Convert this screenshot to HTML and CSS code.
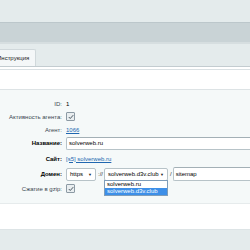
FILE: index.html
```html
<!DOCTYPE html>
<html lang="ru">
<head>
<meta charset="utf-8">
<link rel="stylesheet" href="styles.css">
</head>
<body>
<div class="top"></div>
<div class="band"></div>
<div class="tabs">
  <div class="tab">Инструкция</div>
</div>
<div class="sep"></div>
<div class="content">
  <div class="panel">
    <div class="lbl">ID:</div><div class="val">1</div>
    <div class="lbl">Активность агента:</div><div class="val"><span class="cb"><svg viewBox="0 0 8 8" width="6" height="6"><path d="M1 4 L3 6 L7 1.5" fill="none" stroke="#3c4a55" stroke-width="1.2"/></svg></span></div>
    <div class="lbl">Агент:</div><div class="val"><a class="link">1066</a></div>
    <div class="lbl b">Название:</div><div class="val"><div class="inp wide">solverweb.ru</div></div>
    <div class="lbl b">Сайт:</div><div class="val"><a class="link">[s5] solverweb.ru</a></div>
    <div class="lbl b">Домен:</div>
    <div class="val dom">
      <div class="sel s1">https<span class="arr">▼</span></div>
      <span class="sym">://</span>
      <div class="selwrap">
        <div class="sel s2">solverweb.d3v.club<span class="arr">▼</span></div>
        <div class="drop">
          <div class="opt">solverweb.ru</div>
          <div class="opt on">solverweb.d3v.club</div>
        </div>
      </div>
      <span class="sym">/</span>
      <div class="inp path">sitemap</div>
    </div>
    <div class="lbl">Сжатие в gzip:</div><div class="val"><span class="cb"><svg viewBox="0 0 8 8" width="6" height="6"><path d="M1 4 L3 6 L7 1.5" fill="none" stroke="#3c4a55" stroke-width="1.2"/></svg></span></div>
  </div>
</div>
<div class="gap"></div>
<div class="footer"></div>
</body>
</html>
```
FILE: styles.css
```css
html, body {
  margin: 0;
  padding: 0;
  width: 250px;
  height: 250px;
  overflow: hidden;
  background: #fff;
  font-family: "Liberation Sans", Arial, sans-serif;
  font-size: 6px;
  color: #2d3a43;
}
.top {
  height: 22px;
  background: #e4ebec;
}
.band {
  height: 19px;
  background: #c9d3d6;
  border-top: 1px solid #bcc7cb;
  border-bottom: 2px solid #d6dee0;
}
.tabs {
  height: 22px;
  background: #e4ebec;
  display: flex;
  align-items: flex-end;
  overflow: hidden;
}
.tab {
  margin-left: -8px;
  height: 16px;
  padding: 0 6px 0 4px;
  background: #f4f7f8;
  border: 1px solid #d0d8db;
  border-bottom: none;
  border-radius: 2px 2px 0 0;
  display: flex;
  align-items: center;
  font-size: 6px;
  color: #222;
}
.sep {
  height: 2px;
  border-top: 1px solid #c3ccd0;
  border-bottom: 1px solid #d9e0e3;
}
.content {
  padding-top: 19px;
}
.panel {
  background: #f5f9f9;
  border-top: 1px solid #dde3e5;
  border-bottom: 1px solid #e6ebec;
  padding: 7px 0 7px 0;
  display: grid;
  grid-template-columns: 62px 1fr;
  grid-template-rows: 13px 13px 13px 14px 17px 14px 15px;
  column-gap: 4px;
  align-items: center;
}
.lbl {
  text-align: right;
  color: #3a4750;
  white-space: nowrap;
}
.lbl.b {
  font-weight: bold;
  color: #000;
}
.val {
  display: flex;
  align-items: center;
  color: #000;
  min-width: 0;
}
.cb {
  width: 7px;
  height: 7px;
  border: 1px solid #8c9aa4;
  border-radius: 1px;
  background: #e9eef0;
  display: flex;
  align-items: center;
  justify-content: center;
}
.link {
  color: #2067b0;
  text-decoration: underline;
}
.inp {
  background: #fff;
  border: 1px solid #b7c3c8;
  border-top-color: #a3b0b6;
  border-right: none;
  border-radius: 2px 0 0 2px;
  height: 11px;
  display: flex;
  align-items: center;
  padding-left: 2px;
  color: #000;
}
.inp.wide {
  flex: 1;
}
.sel {
  position: relative;
  background: #fff;
  border: 1px solid #b7c3c8;
  border-radius: 2px;
  height: 11px;
  display: flex;
  align-items: center;
  padding-left: 3px;
  color: #000;
}
.s1 {
  width: 25px;
}
.s2 {
  width: 59px;
}
.arr {
  position: absolute;
  right: 3px;
  top: 4px;
  font-size: 4px;
  line-height: 4px;
  color: #222;
}
.sym {
  padding: 0 1px 0 2px;
  color: #333;
}
.selwrap {
  position: relative;
}
.drop {
  position: absolute;
  left: 0;
  top: 12px;
  width: 62px;
  background: #fff;
  border: 1px solid #7f9db9;
  z-index: 2;
}
.opt {
  height: 7px;
  line-height: 7px;
  padding-left: 2px;
  color: #000;
  white-space: nowrap;
}
.opt.on {
  background: #3d8fe8;
  color: #fff;
}
.inp.path {
  flex: 1;
  height: 12px;
}
.gap {
  height: 25px;
}
.footer {
  height: 30px;
  background: #e4ebec;
  border-top: 1px solid #dde4e6;
}
```
